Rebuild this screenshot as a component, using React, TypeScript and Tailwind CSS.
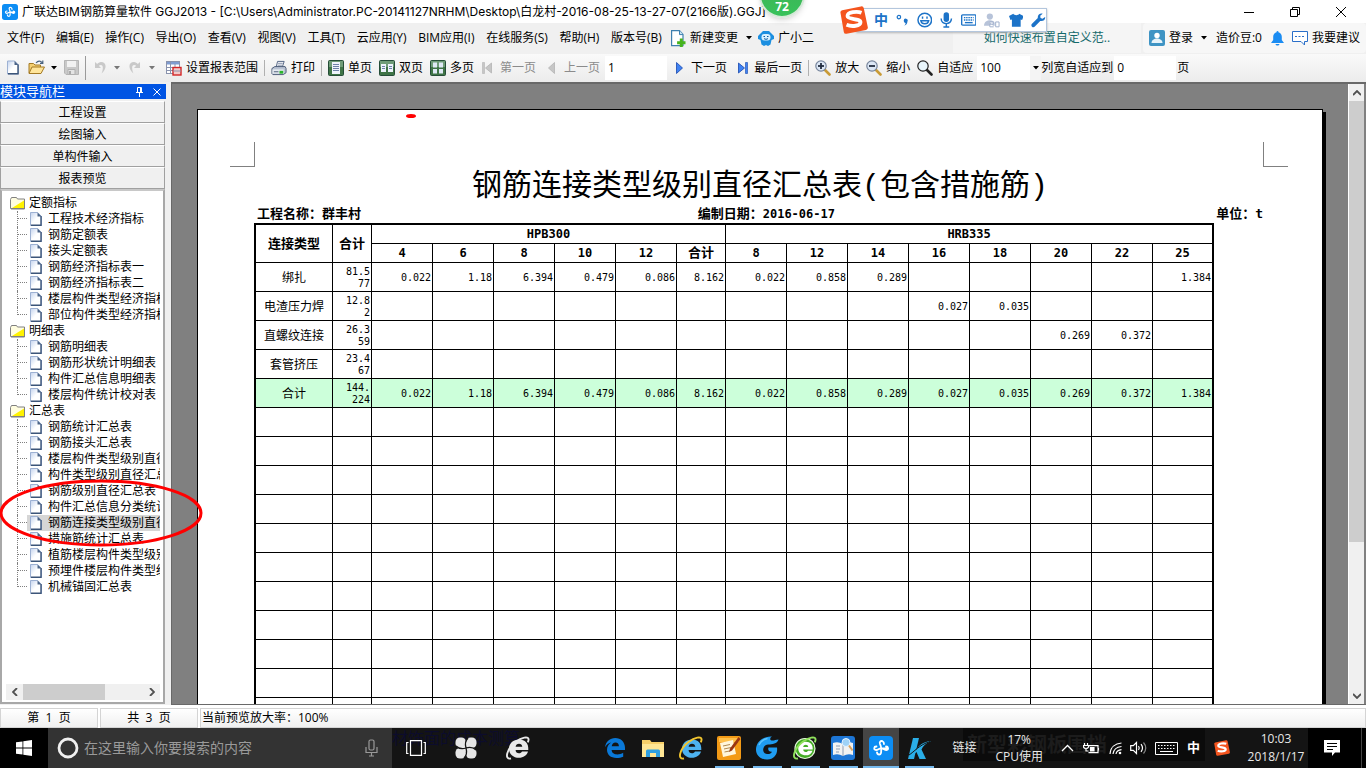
import React, { useState } from "react";

const MENUS = [
  "文件(F)",
  "编辑(E)",
  "操作(C)",
  "导出(O)",
  "查看(V)",
  "视图(V)",
  "工具(T)",
  "云应用(Y)",
  "BIM应用(I)",
  "在线服务(S)",
  "帮助(H)",
  "版本号(B)",
];

const MODULES = ["工程设置", "绘图输入", "单构件输入", "报表预览"];

const TREE = [
  {
    name: "定额指标",
    items: [
      "工程技术经济指标",
      "钢筋定额表",
      "接头定额表",
      "钢筋经济指标表一",
      "钢筋经济指标表二",
      "楼层构件类型经济指标表",
      "部位构件类型经济指标表",
    ],
  },
  {
    name: "明细表",
    items: ["钢筋明细表", "钢筋形状统计明细表", "构件汇总信息明细表", "楼层构件统计校对表"],
  },
  {
    name: "汇总表",
    items: [
      "钢筋统计汇总表",
      "钢筋接头汇总表",
      "楼层构件类型级别直径汇总表",
      "构件类型级别直径汇总表",
      "钢筋级别直径汇总表",
      "构件汇总信息分类统计表",
      "钢筋连接类型级别直径汇总表",
      "措施筋统计汇总表",
      "植筋楼层构件类型级别直径汇总表",
      "预埋件楼层构件类型级别直径汇总表",
      "机械锚固汇总表",
    ],
  },
];

const DIAMETERS = ["4", "6", "8", "10", "12", "合计", "8", "12", "14", "16", "18", "20", "22", "25"];

interface Row {
  name: string;
  total: string[];
  values: string[];
  sum?: boolean;
}

const ROWS: Row[] = [
  {
    name: "绑扎",
    total: ["81.5", "77"],
    values: ["0.022", "1.18", "6.394", "0.479", "0.086", "8.162", "0.022", "0.858", "0.289", "", "", "", "", "1.384"],
  },
  {
    name: "电渣压力焊",
    total: ["12.8", "2"],
    values: ["", "", "", "", "", "", "", "", "", "0.027", "0.035", "", "", ""],
  },
  {
    name: "直螺纹连接",
    total: ["26.3", "59"],
    values: ["", "", "", "", "", "", "", "", "", "", "", "0.269", "0.372", ""],
  },
  {
    name: "套管挤压",
    total: ["23.4", "67"],
    values: ["", "", "", "", "", "", "", "", "", "", "", "", "", ""],
  },
  {
    name: "合计",
    total: ["144.", "224"],
    values: [
      "0.022", "1.18", "6.394", "0.479", "0.086", "8.162", "0.022",
      "0.858", "0.289", "0.027", "0.035", "0.269", "0.372", "1.384",
    ],
    sum: true,
  },
];

/* ---------- small icons ---------- */

function Caret({ className = "text-black" }: { className?: string }) {
  return (
    <svg width="6" height="4" viewBox="0 0 6 4" className={className}>
      <path d="M0 0h6L3 3.6z" fill="currentColor" />
    </svg>
  );
}

function AppLogo({ size }: { size: number }) {
  return (
    <svg width={size} height={size} viewBox="0 0 24 24">
      <rect width="24" height="24" rx="4" fill="#0c8df4" />
      <g fill="none" stroke="#fff" strokeWidth="1.8" strokeLinecap="round">
        <path d="M15 8a3 3 0 0 0-1.500-2.800C11.500 4.400 10.200 6 11 8c.6 1.400 1.200 2.400 1.200 4.500 0 3 .3 6-2 6-1.600 0-2.200-1-2.200-2.200" />
        <path d="M17 10.500c2.500 0 2.800 3.200.5 3.500-2 .2-3-1.700-5.500-1.700-2.200 0-3 1.900-5 1.700-2.500-.3-2.300-3.700.5-3.500M12 12.300h6" />
      </g>
    </svg>
  );
}

function DocIcon({ width = 12, height = 14 }: { width?: number; height?: number }) {
  return (
    <svg width={width} height={height} viewBox="0 0 12 14" className="shrink-0">
      <defs>
        <linearGradient id="paper" x1="0" y1="0" x2="1" y2="1">
          <stop offset="0" stopColor="#c3d3ee" />
          <stop offset=".5" stopColor="#fff" />
        </linearGradient>
      </defs>
      <path d="M.5.5h7.200l3.800 4v9H.5z" fill="url(#paper)" stroke="#9db1d3" />
      <path d="M11 4v9.300H1" fill="none" stroke="#3c5579" strokeWidth="1.400" />
      <path d="M7.500.5l4 4h-4z" fill="#4b6488" />
    </svg>
  );
}

function FolderIcon() {
  return (
    <svg width="16" height="14" viewBox="0 0 16 14" className="shrink-0">
      <path d="M.5 12.500v-9l1-2h5l1 1.500h7v9.500z" fill="#fffde0" stroke="#808080" />
      <path d="M14 4.500V12H2z" fill="#fff200" />
      <path d="M14.500 3.500v9.500H1" fill="none" stroke="#808080" />
    </svg>
  );
}

function OpenIcon() {
  return (
    <svg width="17" height="15" viewBox="0 0 17 15">
      <path d="M1 13V3.500h4.500l1.500 1.500h5.500V13z" fill="#f3cf72" stroke="#a47a25" />
      <path d="M1 13.500l3-6.500h12.500l-3.500 6.500z" fill="#ffe59a" stroke="#a47a25" />
      <path d="M8 3c2-2.500 4.500-2.500 6-.5M14.800.5v2.800H12" fill="none" stroke="#48627f" strokeWidth="1.200" />
    </svg>
  );
}

function SaveIcon() {
  return (
    <svg width="15" height="15" viewBox="0 0 15 15">
      <path d="M.5.5h14v14H2l-1.500-1.500z" fill="#c9c9c9" stroke="#b5b5b5" />
      <path d="M3 1h9v6H3z" fill="#f2f2f2" />
      <path d="M4 9.500h7v5H4z" fill="#e4e4e4" stroke="#b0b0b0" />
      <path d="M5 11h2v3H5z" fill="#aaa" />
    </svg>
  );
}

function UndoIcon({ flip }: { flip?: boolean }) {
  return (
    <svg width="13" height="13" viewBox="0 0 13 13" className={flip ? "-scale-x-100" : ""}>
      <path d="M1 1v6h6L4.800 4.800C8 2.600 10.500 5 7.500 12.500 13.500 7.500 12.500.8 7 .9 5.500 1 4 1.800 3.200 3z" fill="#c9c9c9" />
    </svg>
  );
}

function RangeIcon() {
  return (
    <svg width="16" height="16" viewBox="0 0 16 16">
      <rect x=".5" y="1.500" width="13" height="12" fill="#fff" stroke="#8a93ad" />
      <path d="M1 2h12v2.500H1z" fill="#7f9cd0" />
      <path d="M1 7.500h12M1 10.500h12M4.500 2v11M9 4v9" stroke="#8a93ad" fill="none" />
      <rect x="7" y="7.500" width="8" height="7.500" fill="#f3c9c9" stroke="#d32626" strokeWidth="1.400" />
      <path d="M7 11h8" stroke="#8a93ad" />
    </svg>
  );
}

function PrinterIcon() {
  return (
    <svg width="16" height="16" viewBox="0 0 17 16">
      <path d="M5.500 7l1.500-6h7l-2 6z" fill="#fff" stroke="#4e6080" />
      <path d="M7.500 3h5M7 5h5" stroke="#7e8ca6" />
      <path d="M1 8.500L4 6.500h11l1 2v4.500l-3 2H2l-1-1z" fill="#b8c2d2" stroke="#4a5a75" />
      <path d="M1.500 9.500h12v4.500h-12z" fill="#e6eaf1" />
      <path d="M9 11h4v3H9z" fill="#2bb52b" />
      <path d="M3 12h5" stroke="#4a5a75" />
    </svg>
  );
}

function PagesIcon({ count }: { count: number }) {
  return (
    <svg width="16" height="16" viewBox="0 0 16 16">
      <rect x=".5" y=".5" width="15" height="15" rx="1" fill="#3f7446" stroke="#254d38" />
      <rect x="1" y="1" width="14" height="6" fill="#6f9c78" />
      {count === 1 && (
        <g>
          <path d="M4 2h8v12H4z" fill="#eef3fb" />
          <path d="M5 4.500h6M5 6.500h6M5 8.500h6M5 10.500h6" stroke="#6d81a8" />
        </g>
      )}
      {count === 2 && (
        <g fill="#eef3fb">
          <path d="M2 4h5v8H2zM9 4h5v8H9z" />
          <path d="M3 6.500h3M3 8.500h3M10 6.500h3M10 8.500h3" stroke="#6d81a8" />
        </g>
      )}
      {count === 4 && <path d="M3 2.500h4v5H3zM9 2.500h4v5H9zM3 9h4v4.500H3zM9 9h4v4.500H9z" fill="#dfe8f5" />}
    </svg>
  );
}

function Arrow({ dir, bar, off }: { dir: "left" | "right"; bar?: boolean; off?: boolean }) {
  const fill = off ? "#c6c6c6" : "#3f82f2";
  const stroke = off ? "#b4b4b4" : "#1646ad";
  return (
    <svg width="10" height="12" viewBox="0 0 10 12" className={dir === "left" ? "-scale-x-100" : ""}>
      <path d={bar ? "M.5 1l6 5-6 5z" : "M1.500.5l6 5.500-6 5.500z"} fill={fill} stroke={stroke} strokeWidth=".8" />
      {bar && <path d="M7.500.5h2v11h-2z" fill={fill} stroke={stroke} strokeWidth=".6" />}
    </svg>
  );
}

function Magnifier({ sign }: { sign?: "plus" | "minus" }) {
  return (
    <svg width="16" height="16" viewBox="0 0 16 16">
      <path d="M10 10l4.500 4.500" stroke={sign ? "#c99b36" : "#222"} strokeWidth="2.600" strokeLinecap="round" />
      <circle cx="6" cy="6" r="5.200" fill={sign ? "#dce7f5" : "#e8f5fb"} stroke={sign ? "#77859c" : "#222"} strokeWidth="1.200" />
      {sign && <path d="M3 6h6" stroke="#222d40" strokeWidth="1.800" />}
      {sign === "plus" && <path d="M6 3v6" stroke="#222d40" strokeWidth="1.800" />}
    </svg>
  );
}

function SogouLogo({ size }: { size: number }) {
  return (
    <svg width={size} height={size} viewBox="0 0 28 28">
      <path d="M.5 7Q0 4.800 2.200 4.200L21 .4q2.300-.4 2.800 1.800l4 19q.4 2.200-1.800 2.800L6.500 27.700q-2.300.4-2.700-1.800z" fill="#f4551f" />
      <path
        d="M21.500 6.700C17 5 7.500 6 7.500 10c0 4 13 2 13 6.200 0 3.800-8.500 4.800-14 2.600"
        fill="none"
        stroke="#fff"
        strokeWidth="3.800"
      />
    </svg>
  );
}

/* ---------- window chrome ---------- */

function ImeBar() {
  return (
    <div className="absolute left-[840px] top-[6px] z-20 flex items-center">
      <span className="relative z-10"><SogouLogo size={28} /></span>
      <div className="-ml-3 flex h-[24px] w-[191px] items-center gap-2 border border-[#b3c6dd] bg-white pl-[17px] text-[#1c73c8] shadow-[0_1px_2px_#b5b5b5]">
        <span className="text-sm font-bold leading-4">中</span>
        <svg width="13" height="14" viewBox="0 0 13 14">
          <circle cx="3" cy="4" r="1.800" fill="none" stroke="currentColor" strokeWidth="1.200" />
          <path d="M8 7.500a2 2 0 1 1 3.800 1C11.600 11 10.500 12 8.500 12.800c1-1 1.500-1.800 1.300-2.700-1 0-1.800-1-1.800-2.600z" fill="currentColor" />
        </svg>
        <svg width="16" height="16" viewBox="0 0 16 16" fill="none" stroke="currentColor" strokeWidth="1.500">
          <circle cx="8" cy="8" r="7" />
          <path d="M4 8.800c.8 4 7.200 4 8 0z" />
          <path d="M5.700 4.500v2.200M10.300 4.500v2.200" />
        </svg>
        <svg width="13" height="16" viewBox="0 0 13 16">
          <rect x="3.700" y="0" width="5.600" height="10" rx="2.800" fill="currentColor" />
          <path d="M1.200 6.500c0 7 10.600 7 10.600 0M6.500 12v3M3.500 15.200h6" fill="none" stroke="currentColor" strokeWidth="1.500" />
        </svg>
        <svg width="16" height="12" viewBox="0 0 16 12">
          <rect x=".7" y=".7" width="14.600" height="10.600" rx="1" fill="#fff" stroke="currentColor" strokeWidth="1.400" />
          <path d="M3 3.500h10M3 6h10" stroke="currentColor" strokeWidth="1.400" strokeDasharray="1.500 .8" />
          <path d="M4 8.700h8" stroke="currentColor" strokeWidth="1.400" />
        </svg>
        <svg width="17" height="15" viewBox="0 0 17 15">
          <circle cx="6" cy="3.500" r="3.200" fill="#b7c3d9" />
          <path d="M0 13c0-7 10-7 11-3v3z" fill="#b7c3d9" />
          <path d="M6 9h3.500v2.300H6V14h4M12 9h3.500v5H12z" fill="#fff" stroke="#9fafcb" />
        </svg>
        <svg width="15" height="14" viewBox="0 0 15 14">
          <path d="M4.500.5C5.500 2.500 9.500 2.500 10.500.5L15 3l-1.500 4-1.500-.6V14H3V6.400L1.500 7 0 3z" fill="currentColor" />
        </svg>
        <svg width="15" height="15" viewBox="0 0 15 15">
          <path d="M14.500 3.800l-2.700 2-2-.9-.3-2.200L12 .6C9.500-.3 6.500 1.500 7 5L.8 11.200c-1.500 1.800 1.200 4.300 2.900 2.800L9.500 8c3 .7 5.700-1.500 5-4.200z" fill="currentColor" />
        </svg>
      </div>
    </div>
  );
}

function TitleBar() {
  return (
    <header className="flex h-[23px] shrink-0 items-center bg-white pl-[2px]">
      <AppLogo size={16} />
      <h1 className="ml-1 flex-1 overflow-hidden whitespace-nowrap font-['Inter','Noto_Sans_CJK_SC',sans-serif] text-xs">
        广联达BIM钢筋算量软件 GGJ2013 - [C:\Users\Administrator.PC-20141127NRHM\Desktop\白龙村-2016-08-25-13-27-07(2166版).GGJ]
      </h1>
      <div className="mr-[2px] flex h-5 shrink-0">
        <button aria-label="最小化" className="flex w-[46px] items-center justify-center">
          <svg width="10" height="10" viewBox="0 0 10 10"><path d="M0 5.500h10" stroke="#000" /></svg>
        </button>
        <button aria-label="还原" className="flex w-[46px] items-center justify-center">
          <svg width="10" height="10" viewBox="0 0 10 10" fill="none" stroke="#000">
            <path d="M.5 2.500h7v7h-7zM2.500 2.500v-2h7v7h-2" />
          </svg>
        </button>
        <button aria-label="关闭" className="flex w-[46px] items-center justify-center">
          <svg width="10" height="10" viewBox="0 0 10 10"><path d="M0 0l10 10M10 0L0 10" stroke="#000" /></svg>
        </button>
      </div>
    </header>
  );
}

function MenuBar() {
  return (
    <nav className="flex h-[31px] shrink-0 items-center bg-[#f0f0f0] pb-px pl-[7px] text-xs">
      <div className="flex w-[655px] justify-between">
        {MENUS.map((m) => (
          <button key={m} className="whitespace-nowrap">{m}</button>
        ))}
      </div>
      <button className="ml-[9px] flex items-center whitespace-nowrap">
        <svg width="15" height="17" viewBox="0 0 15 17">
          <path d="M.6.600h7.900l3.500 4v11H.6z" fill="#fff" stroke="#3d7fae" strokeWidth="1.200" />
          <path d="M8.500.600v4H12" fill="#c8e2f3" stroke="#3d7fae" />
          <path d="M8.800 8.500h3v2.700h2.700v3h-2.700v2.700h-3v-2.700H6.100v-3h2.700z" fill="#46b31c" />
        </svg>
        <span className="ml-1 mr-2">新建变更</span>
        <Caret />
      </button>
      <button className="ml-[6px] flex items-center gap-1 whitespace-nowrap">
        <svg width="16" height="16" viewBox="0 0 16 16">
          <path d="M2.500 3.500L5 1h6l2.500 2.500L16 6v3l-2.500 1-1 4.500L10 16 8 15l-2 1-2.500-1.500-1-4.500L0 9V6z" fill="#1c8fe0" />
          <rect x="3.500" y="4" width="9" height="6.500" rx="3" fill="#d8f1ff" />
          <path d="M5.500 6.500h1.500M9 6.500h1.500M6 8.500c1 1 3 1 4 0" stroke="#0e5ba0" fill="none" />
        </svg>
        广小二
      </button>
      <div className="ml-auto flex h-full items-center">
        <a href="#tip" className="flex h-full w-[188px] items-center justify-center bg-[#f5f5f5] text-xs text-[#14696b]">
          如何快速布置自定义范..
        </a>
        <div className="ml-[2px] flex h-full items-center whitespace-nowrap rounded bg-[#f7f7f7] px-[6px]">
          <button className="flex items-center">
            <svg width="16" height="16" viewBox="0 0 16 16">
              <rect width="16" height="16" rx="2" fill="#3f94c4" />
              <circle cx="8" cy="5.500" r="2.700" fill="#fff" />
              <path d="M2.500 13c0-6 11-6 11 0z" fill="#e6f3fa" />
            </svg>
            <span className="ml-1 mr-2">登录</span>
            <Caret />
          </button>
          <span className="ml-[9px]">造价豆:0</span>
          <svg width="13" height="15" viewBox="0 0 13 15" className="ml-[9px]">
            <path d="M6.500 0c1 0 1 .8 1 1.200C10 2 10.800 4 10.800 6v3L13 12H0l2.200-3V6c0-2 .8-4 3.300-4.800C5.500.8 5.500 0 6.500 0zM4.500 13h4c-.5 2-3.500 2-4 0z" fill="#1b8cf2" />
          </svg>
          <button className="ml-2 flex items-center gap-1">
            <svg width="16" height="16" viewBox="0 0 16 16" fill="none" stroke="#2a6fc9">
              <path d="M.5 1.500h15v10h-3v3.500l-3.500-3.500H.5z" fill="#fff" />
              <path d="M3 6.500h10" strokeDasharray="2 1.500" />
            </svg>
            我要建议
          </button>
        </div>
      </div>
    </nav>
  );
}

function Sep() {
  return <span className="mx-[6px] h-4 w-px shrink-0 bg-[#b0b0b0]" />;
}

function Tool({ label, off, children }: { label: string; off?: boolean; children: React.ReactNode }) {
  return (
    <button disabled={off} className={`flex items-center gap-1 whitespace-nowrap ${off ? "text-[#8b8b8b]" : ""}`}>
      {children}
      {label}
    </button>
  );
}

function ToolBar() {
  const [page, setPage] = useState("1");
  const [fit, setFit] = useState("0");

  return (
    <div className="flex h-[28px] shrink-0 items-center bg-linear-to-b from-[#fafafa] to-[#ececec] pb-px text-xs">
      <div className="flex items-center pl-[7px]">
        <button aria-label="新建"><DocIcon height={15} /></button>
        <button aria-label="打开" className="ml-[9px] flex items-center gap-[6px]"><OpenIcon /><Caret /></button>
        <button aria-label="保存" className="ml-[7px]"><SaveIcon /></button>
        <span className="ml-[6px] h-6 w-px bg-[#9a9a9a]" />
        <button aria-label="撤销" className="ml-2 flex items-center gap-[7px]"><UndoIcon /><Caret className="text-[#777]" /></button>
        <button aria-label="恢复" className="ml-2 flex items-center gap-2"><UndoIcon flip /><Caret className="text-[#777]" /></button>
      </div>
      <div className="ml-[11px] flex items-center">
        <Tool label="设置报表范围"><RangeIcon /></Tool>
        <Sep />
        <Tool label="打印"><PrinterIcon /></Tool>
        <Sep />
        <div className="flex gap-[7px]">
          <Tool label="单页"><PagesIcon count={1} /></Tool>
          <Tool label="双页"><PagesIcon count={2} /></Tool>
          <Tool label="多页"><PagesIcon count={4} /></Tool>
        </div>
        <div className="ml-2 flex items-center gap-[10px]">
          <button disabled className="flex items-center gap-2 text-[#8b8b8b]"><Arrow dir="left" bar off />第一页</button>
          <button disabled className="flex items-center gap-2 text-[#8b8b8b]"><Arrow dir="left" off />上一页</button>
        </div>
        <input
          aria-label="页码"
          value={page}
          onChange={(e) => setPage(e.target.value)}
          className="ml-[5px] h-6 w-[62px] bg-white px-[3px] outline-none"
        />
        <button className="ml-2 flex items-center gap-[6px]"><Arrow dir="right" />下一页</button>
        <button className="ml-[11px] flex items-center gap-[6px]"><Arrow dir="right" bar />最后一页</button>
        <Sep />
        <div className="flex gap-[7px]">
          <Tool label="放大"><Magnifier sign="plus" /></Tool>
          <Tool label="缩小"><Magnifier sign="minus" /></Tool>
          <Tool label="自适应"><Magnifier /></Tool>
        </div>
        <div className="relative ml-1 flex items-center">
          <select aria-label="缩放比例" defaultValue="100" className="h-6 w-[64px] appearance-none bg-white px-[3px] outline-none">
            <option>50</option>
            <option>100</option>
            <option>200</option>
          </select>
          <span className="pointer-events-none absolute right-0 flex h-6 w-[11px] items-center justify-center bg-[#f4f4f4]">
            <Caret />
          </span>
        </div>
        <label className="flex items-center whitespace-nowrap">
          列宽自适应到
          <input
            value={fit}
            onChange={(e) => setFit(e.target.value)}
            className="mx-px h-6 w-[62px] bg-white px-[3px] outline-none"
          />
          页
        </label>
      </div>
    </div>
  );
}

/* ---------- left panel ---------- */

function ReportTree() {
  const [selected, setSelected] = useState("钢筋连接类型级别直径汇总表");

  return (
    <div className="flex min-h-0 flex-1 flex-col border-2 border-[#a8a8a8] border-t-[#c8c8c8] bg-white pl-1 pr-[3px] pt-1 text-xs leading-4">
      <ul className="flex-1 overflow-hidden">
        {TREE.map((group) => (
          <li key={group.name}>
            <button className="flex h-4 w-full items-center gap-[3px] pl-1">
              <FolderIcon />
              {group.name}
            </button>
            <ul>
              {group.items.map((item, i) => (
                <li key={item} className="flex h-4 pl-[11px]">
                  <span
                    className={`w-px shrink-0 border-l border-dotted border-[#808080] ${
                      i === group.items.length - 1 ? "h-2" : "h-4"
                    }`}
                  />
                  <span className="h-2 w-[9px] shrink-0 border-b border-dotted border-[#808080]" />
                  <button
                    onClick={() => setSelected(item)}
                    className={`flex min-w-0 flex-1 items-center overflow-hidden whitespace-nowrap pl-[3px] text-left ${
                      selected === item ? "bg-[#d6d6d6]" : ""
                    }`}
                  >
                    <DocIcon />
                    <span className="ml-[6px]">{item}</span>
                  </button>
                </li>
              ))}
            </ul>
          </li>
        ))}
      </ul>
      <div className="mb-[2px] flex h-4 items-center bg-[#f0f0f0] text-[#505050]">
        <button aria-label="向左" className="flex w-[17px] justify-center">
          <svg width="6" height="8" viewBox="0 0 6 8"><path d="M5 0L1 4l4 4" fill="none" stroke="currentColor" strokeWidth="1.800" /></svg>
        </button>
        <span className="h-full w-[82px] bg-[#cdcdcd]" />
        <button aria-label="向右" className="ml-auto flex w-[17px] justify-center">
          <svg width="6" height="8" viewBox="0 0 6 8"><path d="M1 0l4 4-4 4" fill="none" stroke="currentColor" strokeWidth="1.800" /></svg>
        </button>
      </div>
    </div>
  );
}

function SidePanel() {
  return (
    <aside className="flex w-[166px] shrink-0 flex-col pb-px pt-[2px]">
      <div className="mb-[2px] flex h-[15px] items-center bg-[#0054e3] text-[13px] leading-[15px] text-white">
        <span className="flex-1">模块导航栏</span>
        <button aria-label="固定" className="mr-[10px]">
          <svg width="7" height="10" viewBox="0 0 7 10" fill="none" stroke="#fff">
            <path d="M1.500 5.500v-5h4v5M4.500.5v5M0 5.500h7M3.500 6v4" />
          </svg>
        </button>
        <button aria-label="关闭面板" className="mr-[5px]">
          <svg width="8" height="8" viewBox="0 0 8 8"><path d="M.5.5l7 7M7.500.5l-7 7" stroke="#fff" /></svg>
        </button>
      </div>
      <div className="flex min-h-0 flex-1 flex-col pr-px">
        {MODULES.map((m) => (
          <button key={m} className="h-[22px] shrink-0 border border-b-[#a0a0a0] border-l-[#a0a0a0] border-r-[#a0a0a0] border-t-white bg-[#f0f0f0] pt-px text-xs">
            {m}
          </button>
        ))}
        <ReportTree />
      </div>
    </aside>
  );
}

/* ---------- report ---------- */

function cellEdge(i: number) {
  return i === DIAMETERS.length - 1 ? "border-r-2" : "border-r";
}

function ReportTable() {
  return (
    <table className="w-full table-fixed border-separate border-spacing-0 border-l-2 border-t-2 border-black">
      <colgroup>
        <col className="w-[77px]" />
        <col className="w-[39px]" />
        {DIAMETERS.map((d, i) => (
          <col key={i} className={i === 5 ? "w-[49px]" : "w-[61px]"} />
        ))}
      </colgroup>
      <thead className="text-[13px] leading-4">
        <tr className="h-[19px]">
          <th rowSpan={2} className="border-b border-r border-black p-0">连接类型</th>
          <th rowSpan={2} className="border-b border-r border-black p-0">合计</th>
          <th colSpan={6} className="border-b border-r border-black p-0 text-xs">HPB300</th>
          <th colSpan={8} className="border-b border-r-2 border-black p-0 text-xs">HRB335</th>
        </tr>
        <tr className="h-[19px]">
          {DIAMETERS.map((d, i) => (
            <th key={i} className={`border-b border-black p-0 ${cellEdge(i)} ${d === "合计" ? "" : "text-xs leading-4"}`}>{d}</th>
          ))}
        </tr>
      </thead>
      <tbody className="text-[10px] leading-3">
        {ROWS.map((row) => (
          <tr key={row.name} className={`h-[29px] ${row.sum ? "bg-[#ccffda]" : ""}`}>
            <td className="border-b border-r border-black p-0 pt-px text-center text-xs">{row.name}</td>
            <td className="border-b border-r border-black p-0 pr-px pt-px text-right">
              {row.total[0]}
              <br />
              {row.total[1]}
            </td>
            {row.values.map((v, i) => (
              <td key={i} className={`border-b border-black p-0 pr-px pt-px text-right ${cellEdge(i)}`}>{v}</td>
            ))}
          </tr>
        ))}
        {Array.from({ length: 14 }, (_, r) => (
          <tr key={r} className="h-[29px]">
            <td className="border-b border-r border-black p-0" />
            <td className="border-b border-r border-black p-0" />
            {DIAMETERS.map((_, i) => (
              <td key={i} className={`border-b border-black p-0 ${cellEdge(i)}`} />
            ))}
          </tr>
        ))}
      </tbody>
    </table>
  );
}

function ReportPage() {
  return (
    <div className="mr-[25px] min-w-0 flex-1 border-l border-r border-t border-black bg-white font-['DejaVu_Sans_Mono','Noto_Sans_CJK_SC',monospace] shadow-[3px_3px_0_#000]">
      <div className="flex justify-between pl-8 pr-[34px] pt-8">
        <span className="h-[25px] w-[25px] border-b border-r border-[#808080]" />
        <span className="h-[25px] w-[25px] border-b border-l border-[#808080]" />
      </div>
      <h2 className="pt-px text-center font-['Liberation_Mono','Noto_Sans_CJK_SC',monospace] text-[30px] leading-[38px]">
        钢筋连接类型级别直径汇总表(包含措施筋)
      </h2>
      <div className="grid h-[17px] grid-cols-[17fr_20fr_auto] px-[59px] text-[13px] font-bold leading-4">
        <span>工程名称：群丰村</span>
        <span className="flex">编制日期：<span className="text-xs leading-4">2016-06-17</span></span>
        <span>单位：t</span>
      </div>
      <div className="pl-14 pr-[109px]">
        <ReportTable />
      </div>
    </div>
  );
}

function Preview() {
  return (
    <main className="ml-[5px] flex min-w-0 flex-1 border-b border-l border-t-2 border-[#696969] bg-[#808080]">
      <div className="relative flex min-w-0 flex-1 overflow-hidden pl-[25px] pt-[25px]">
        <ReportPage />
        <svg width="10" height="4" viewBox="0 0 10 4" className="absolute left-[234px] top-[30px]">
          <ellipse cx="5" cy="2" rx="5" ry="2" fill="#f00" />
        </svg>
      </div>
      <div className="mr-[2px] flex w-4 shrink-0 flex-col border-l border-white bg-[#f0f0f0] text-[#505050]">
        <button aria-label="向上" className="flex h-[17px] items-center justify-center">
          <svg width="8" height="6" viewBox="0 0 8 6"><path d="M0 5l4-4 4 4" fill="none" stroke="currentColor" strokeWidth="1.800" /></svg>
        </button>
        <span className="h-[441px] bg-[#cdcdcd]" />
        <button aria-label="向下" className="mt-auto flex h-[17px] items-center justify-center">
          <svg width="8" height="6" viewBox="0 0 8 6"><path d="M0 1l4 4 4-4" fill="none" stroke="currentColor" strokeWidth="1.800" /></svg>
        </button>
      </div>
    </main>
  );
}

function StatusBar() {
  return (
    <footer className="flex h-[23px] shrink-0 gap-[2px] bg-white pt-[3px] text-xs">
      <span className="flex w-[98px] items-center justify-center border border-[#d4d4d4] bg-linear-to-b from-white to-[#f0f0f0]">第&nbsp; 1 &nbsp;页</span>
      <span className="flex w-[98px] items-center justify-center border border-[#d4d4d4] bg-linear-to-b from-white to-[#f0f0f0]">共&nbsp; 3 &nbsp;页</span>
      <span className="flex flex-1 items-center border border-[#d4d4d4] bg-linear-to-b from-white to-[#f0f0f0] pl-px">当前预览放大率：100%</span>
    </footer>
  );
}

/* ---------- taskbar ---------- */

const E_PATH =
  "M0 9.200C.9 3.500 5 0 10.200 0 16 0 20 4.200 20 9.800V12H6.600c.2 3 2.700 4.400 5.600 4.400 2.300 0 4.200-.6 6-1.600v3.900c-2 .9-4.200 1.300-6.700 1.300C5.600 20 2 16.700 2 11.800c0-3 1.600-5.700 4.300-7.200C3.700 5.200 1.500 6.700 0 9.200zM6.700 8.300h7.200c0-2.300-1.200-3.700-3.400-3.700-2.100 0-3.400 1.500-3.800 3.700z";

function EdgeGlyph() {
  return (
    <svg width="20" height="20" viewBox="0 0 20 20">
      <path d={E_PATH} fill="#0a78d7" />
    </svg>
  );
}

function OrbitE({ letter, ring, disc }: { letter: string; ring: string; disc?: string }) {
  return (
    <svg width="24" height="24" viewBox="0 0 24 24">
      {disc && <circle cx="12" cy="12.500" r="10" fill={disc} stroke="#e6f7dd" strokeWidth="1.200" />}
      <path
        d="M22 15.500h-6c-.6 1.200-1.600 1.800-3 1.800-2 0-3.300-1.200-3.400-3.300h12.700C22.900 7.500 19 3.500 13 3.500 7.300 3.500 3 7.300 3 12.700 3 18 7.200 21.800 13 21.800c4.400 0 7.800-2.400 9-6.300zM9.600 10.800c.3-1.900 1.500-3 3.400-3s3.100 1.100 3.300 3z"
        fill={letter}
        className={disc ? "origin-center scale-75" : ""}
      />
      <path d="M5 22.500C-2 24 .5 13 9.500 6 16 1 22 .3 22.500 3c.2 1-.1 2-.7 3.300" fill="none" stroke={ring} strokeWidth="1.900" />
    </svg>
  );
}

function TaskApp({ label, open, active, children }: { label: string; open?: boolean; active?: boolean; children: React.ReactNode }) {
  return (
    <button aria-label={label} className={`flex w-9 flex-col items-center ${active ? "bg-[#454545]" : ""}`}>
      <span className="flex flex-1 items-center pt-[2px]">{children}</span>
      <span className={`h-[2px] ${active ? "w-full" : "w-[29px]"} ${open ? "bg-[#76b9ed]" : ""}`} />
    </button>
  );
}

function TaskBar() {
  return (
    <div className="relative flex h-10 shrink-0 bg-[#141414] text-xs text-[#e8e8e8]">
      <span className="absolute left-[392px] top-0 text-base leading-5 text-[#0c0c2c]">材饰面的成本测算</span>
      <span className="absolute left-[963px] top-0 flex h-[33px] w-[242px] items-center bg-[#0b0b0b] pl-1 text-xl font-bold text-[#1c1c1c]">新型彩钢板围挡</span>
      <button aria-label="开始" className="flex w-12 items-center justify-center bg-black">
        <svg width="16" height="16" viewBox="0 0 16 16"><path d="M0 2.300l6.500-.9v6.200H0zM7.300 1.300L16 0v7.600H7.300zM0 8.400h6.500v6.200L0 13.700zM7.300 8.400H16V16l-8.700-1.300z" fill="#fff" /></svg>
      </button>
      <div className="flex w-[344px] items-center bg-[#333] pl-[9px] pr-[14px]">
        <svg width="22" height="22" viewBox="0 0 22 22"><circle cx="11" cy="11" r="9" fill="none" stroke="#f0f0f0" strokeWidth="2.800" /></svg>
        <input aria-label="搜索" placeholder="在这里输入你要搜索的内容" className="ml-[5px] min-w-0 flex-1 bg-transparent text-sm outline-none placeholder:text-[#9a9a9a]" />
        <svg width="13" height="18" viewBox="0 0 13 18" fill="none" stroke="#9a9a9a" strokeWidth="1.200">
          <rect x="4" y="1" width="5" height="10" rx="1.500" />
          <path d="M1 8v5.500h11V8M6.500 13.500V17M4 17h5" />
        </svg>
      </div>
      <div className="relative flex items-center pl-[14px]">
        <button aria-label="任务视图">
          <svg width="20" height="16" viewBox="0 0 20 16" fill="none" stroke="#fff" strokeWidth="1.200">
            <path d="M4.500.7h11v14.600h-11zM2.500 2.500H.7v11h1.800M17.500 2.500h1.800v11h-1.800" />
          </svg>
        </button>
        <button aria-label="风车" className="ml-[29px]">
          <svg width="22" height="22" viewBox="0 0 22 22">
            <g fill="#e6e6e6">
              <rect x=".5" y=".5" width="10.500" height="10.500" rx="4.500" />
              <rect x="11" y=".5" width="10.500" height="10.500" rx="4.500" />
              <rect x=".5" y="11" width="10.500" height="10.500" rx="4.500" />
              <rect x="11" y="11" width="10.500" height="10.500" rx="4.500" />
              <rect x="7" y="7" width="8" height="8" />
            </g>
            <path
              d="M11 11C10 7.500 10.500 3.500 13 1M11 11c3.500-1 7.500-.5 10 2M11 11c1 3.500.5 7.500-2 10M11 11c-3.500 1-7.500.5-10-2"
              fill="none"
              stroke="#141414"
              strokeWidth="1.300"
            />
          </svg>
        </button>
        <button aria-label="浏览器" className="ml-[29px]"><OrbitE letter="#e9e9e9" ring="#e9e9e9" /></button>
      </div>
      <div className="ml-[67px] flex gap-[2px]">
        <TaskApp label="Edge"><EdgeGlyph /></TaskApp>
        <TaskApp label="文件资源管理器">
          <svg width="22" height="19" viewBox="0 0 22 19">
            <path d="M0 1h8l1.500 2H22v15H0z" fill="#f7cf68" />
            <path d="M0 5h22v13H0z" fill="#ffe694" />
            <path d="M4 18v-6q0-1.500 1.500-1.500h11q1.500 0 1.500 1.500v6h-4v-4H8v4z" fill="#2f9fe0" />
          </svg>
        </TaskApp>
        <TaskApp label="Internet Explorer"><OrbitE letter="#4db2ef" ring="#f3c62f" /></TaskApp>
        <TaskApp label="便笺" open>
          <svg width="24" height="24" viewBox="0 0 24 24">
            <rect width="24" height="24" rx="2" fill="#f39a16" />
            <path d="M2 2h20v4H2z" fill="#ffc04a" />
            <path d="M3 7l13-3 3 14-13 3z" fill="#fff6dc" />
            <path d="M6 10l7-1.500M7 13l7-1.500M7.500 16l5-1" stroke="#b08850" />
            <path d="M21.500 1L13 12.500l-1 3.500 3-1.500L23.500 3z" fill="#9a3512" />
          </svg>
        </TaskApp>
        <TaskApp label="G 浏览器" open>
          <svg width="24" height="24" viewBox="0 0 24 24">
            <path d="M23.500 3.500c-3 0-4.500 1.500-7 1C14.500 4 15 1.500 17 .5 9 0 1.500 5 1 13c-.3 6.500 5 10.800 11.500 10.500C19 23.300 23 18 22 11.500h-8.500c-1 2.500.5 4.500 3.500 4.200-1 2-3.500 2.800-6 2C6.500 16.200 7.500 9 13 8.500c4.500-.3 9-.5 10.500-5z" fill="#1f9cf0" />
            <path d="M4 9c2-4.500 5.500-6 8.500-6.500" stroke="#5cc4ff" fill="none" strokeWidth="1.500" />
          </svg>
        </TaskApp>
        <TaskApp label="安全浏览器" open><OrbitE letter="#fff" ring="#8fe05c" disc="#43ac24" /></TaskApp>
        <TaskApp label="图书" open>
          <svg width="24" height="24" viewBox="0 0 24 24">
            <rect width="24" height="24" rx="3" fill="#1d76d6" />
            <path d="M2 7q5-2 10 1 5-3 10-1v12q-5-2-10 1-5-3-10-1z" fill="#f2f2f2" />
            <path d="M12 8v12M5 10h4M5 13h4M5 16h3" stroke="#8e9db4" fill="none" />
            <circle cx="15" cy="6.500" r="4" fill="#9fd2f7" stroke="#e8f4ff" />
            <path d="M18 9.500l3.500 5" stroke="#d8a05a" strokeWidth="2" />
          </svg>
        </TaskApp>
        <TaskApp label="广联达" open active><AppLogo size={24} /></TaskApp>
        <TaskApp label="K" open>
          <svg width="23" height="23" viewBox="0 0 23 23">
            <path d="M5 1h6L6 22H0z" fill="#2aaee8" />
            <path d="M8 13C11 8 16 4.500 23 4c-5 2-8 5-9.500 8.500L18 22h-6.500L8.500 15 5 18z" fill="#2aaee8" />
            <path d="M1 18C6 15 11 8 22 4.500" stroke="#141414" fill="none" />
          </svg>
        </TaskApp>
      </div>
      <div className="relative ml-auto flex items-center whitespace-nowrap">
        <span>链接</span>
        <span className="ml-[19px] text-center leading-[17px]">17%<br />CPU使用</span>
        <svg width="13" height="8" viewBox="0 0 13 8" className="ml-[18px]"><path d="M1 7l5.500-5.500L12 7" fill="none" stroke="#fff" strokeWidth="1.300" /></svg>
        <svg width="17" height="13" viewBox="0 0 17 13" className="ml-[9px]" fill="none" stroke="#fff" strokeWidth="1.200">
          <path d="M6 3.600h9v7H5.500M15.500 6v2.500M1.500 1v2.500M4.500 1v2.500M.5 3.500h5V5Q5 6.500 3 6.500 1 6.500.5 5zM3 6.500V9h2.500" />
          <path d="M7.500 5.500H11V9H7.500z" fill="#fff" />
        </svg>
        <svg width="13" height="13" viewBox="0 0 13 13" className="ml-[9px]" fill="none" stroke="#fff" strokeWidth="1.200">
          <path d="M1 12C1.500 5.500 6 1.500 12.500 1M4 12c.5-4 3.500-7 8.500-7.500M7 12c.3-2.200 2-4 5.500-4.300" />
          <circle cx="11" cy="11" r="1.300" fill="#fff" stroke="none" />
        </svg>
        <svg width="17" height="14" viewBox="0 0 17 14" className="ml-2" fill="none" stroke="#fff" strokeWidth="1.200">
          <path d="M.7 4.700h2.600L6.500 1.500v11L3.300 9.300H.7zM8.500 5q1.500 2 0 4M11 3.200q3 3.800 0 7.600" />
          <path d="M13.500 1.500q4.500 5.500 0 11" stroke="#888" />
        </svg>
        <svg width="23" height="13" viewBox="0 0 23 13" className="ml-2" fill="none" stroke="#fff">
          <path d="M.5.5h22v12H.5z" />
          <path d="M3 3.500h17M3 6.500h17" strokeDasharray="1.500 1.500" />
          <path d="M5 9.500h13" />
        </svg>
        <span className="ml-[9px] text-[13px] font-bold text-white">中</span>
        <span className="ml-[14px]"><SogouLogo size={16} /></span>
        <time className="ml-[16px] w-[60px] text-center leading-[18px]">10:03<br />2018/1/17</time>
        <button aria-label="操作中心" className="ml-[2px] flex h-full w-[58px] items-center bg-black pl-4">
          <svg width="16" height="16" viewBox="0 0 16 16">
            <path d="M0 0h16v12.500H11L8 16v-3.500H0z" fill="#fff" />
            <path d="M3 3.500h10M3 6.500h10M3 9.500h6" stroke="#000" />
          </svg>
          <span className="ml-auto mr-1 h-full w-px bg-[#444]" />
        </button>
      </div>
    </div>
  );
}

export default function App() {
  return (
    <div className="relative flex h-screen min-w-0 flex-col overflow-hidden bg-[#f0f0f0] font-['Open_Sans','Noto_Sans_CJK_SC',sans-serif] text-black">
      <TitleBar />
      <MenuBar />
      <ToolBar />
      <div className="flex min-h-0 flex-1">
        <SidePanel />
        <Preview />
      </div>
      <StatusBar />
      <TaskBar />

      {/* floating pieces over the window */}
      <span className="absolute left-[759px] top-[-28px] z-20 flex h-[46px] w-[46px] items-end justify-center rounded-full border-2 border-[#d5e8d8] bg-linear-to-b from-[#3fae55] to-[#37c25a] pb-px text-xs font-bold text-white shadow-md">
        72
      </span>
      <ImeBar />
      <svg width="204" height="70" viewBox="0 0 204 70" className="pointer-events-none absolute left-0 top-[478px] z-20">
        <ellipse cx="101" cy="35" rx="100" ry="32" fill="none" stroke="#f00" strokeWidth="3" />
      </svg>
    </div>
  );
}
